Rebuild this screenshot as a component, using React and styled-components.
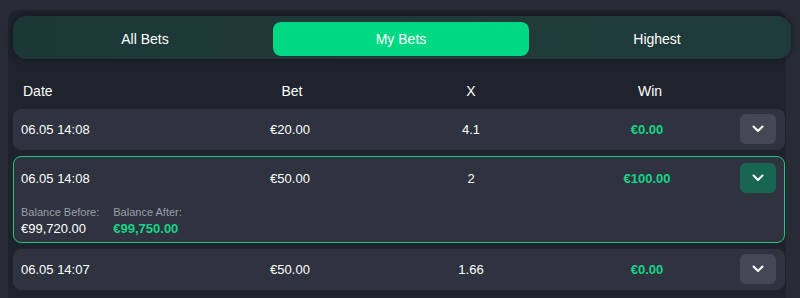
import React from 'react'
import styled, { createGlobalStyle } from 'styled-components'

const GlobalStyle = createGlobalStyle`
  body {
    margin: 0;
    background: #272c37;
    font-family: "Liberation Sans", Arial, sans-serif;
    color: #ffffff;
  }
`

const bets = [
  { date: '06.05 14:08', bet: '€20.00', x: '4.1', win: '€0.00' },
  {
    date: '06.05 14:08', bet: '€50.00', x: '2', win: '€100.00',
    open: true, before: '€99,720.00', after: '€99,750.00',
  },
  { date: '06.05 14:07', bet: '€50.00', x: '1.66', win: '€0.00' },
]

function Chevron() {
  return (
    <svg width="12" height="8" viewBox="0 0 12 8" fill="none">
      <path d="M1.5 1.5 L6 6 L10.5 1.5" stroke="#fff" strokeWidth="2" strokeLinecap="round" strokeLinejoin="round" />
    </svg>
  )
}

function BetRow({ bet }) {
  return (
    <Row open={bet.open}>
      <Cells>
        <Cell>{bet.date}</Cell>
        <Cell center>{bet.bet}</Cell>
        <Cell center>{bet.x}</Cell>
        <Cell center green>{bet.win}</Cell>
        <Toggle open={bet.open}><Chevron /></Toggle>
      </Cells>
      {bet.open && (
        <Details>
          <Balance>
            <Label>Balance Before:</Label>
            <Amount>{bet.before}</Amount>
          </Balance>
          <Balance>
            <Label>Balance After:</Label>
            <Amount green>{bet.after}</Amount>
          </Balance>
        </Details>
      )}
    </Row>
  )
}

export default function App() {
  return (
    <>
      <GlobalStyle />
      <Panel>
        <Tabs>
          <Tab>All Bets</Tab>
          <Tab active>My Bets</Tab>
          <Tab>Highest</Tab>
        </Tabs>
        <Header>
          <span>Date</span>
          <HeadCell>Bet</HeadCell>
          <HeadCell>X</HeadCell>
          <HeadCell>Win</HeadCell>
        </Header>
        <List>
          {bets.map((b, i) => <BetRow key={i} bet={b} />)}
        </List>
      </Panel>
    </>
  )
}

const Panel = styled.div`
  margin: 10px 14px 0 8px;
  height: 288px;
  background: #1f232d;
  border-radius: 10px 10px 0 0;
  padding: 6px 0 0 5px;
  box-sizing: border-box;
`
const Tabs = styled.div`
  display: grid;
  grid-template-columns: repeat(3, 1fr);
  height: 43px;
  margin-right: -5px;
  padding: 6px 6px 3px 4px;
  box-sizing: border-box;
  border-radius: 14px;
  background: linear-gradient(90deg, #1c3836 0%, #213b3b 60%, #1f3a3a 100%);
  box-shadow: 0 0 6px rgba(10, 12, 18, 0.6);
`
const Tab = styled.div`
  display: flex;
  align-items: center;
  justify-content: center;
  font-size: 14px;
  color: #ffffff;
  border-radius: 8px;
  background: ${p => (p.active ? '#00d884' : 'transparent')};
`
const Header = styled.div`
  display: grid;
  grid-template-columns: 192px 154px 204px 154px;
  padding: 24px 0 0 10px;
  height: 50px;
  box-sizing: border-box;
  font-size: 14px;
  line-height: 16px;
`
const HeadCell = styled.span`
  text-align: center;
`
const List = styled.div`
  display: flex;
  flex-direction: column;
  gap: 6px;
  margin-right: 1px;
`
const Row = styled.div`
  background: #2e333f;
  border-radius: 8px;
  border: 1px solid ${p => (p.open ? '#1fc583' : 'transparent')};
  padding: ${p => (p.open ? '6px 8px 5px 7px' : '4px 8px 5px 7px')};
`
const Cells = styled.div`
  display: grid;
  grid-template-columns: 190px 158px 204px 148px 1fr;
  align-items: center;
  height: 30px;
`
const Cell = styled.div`
  font-size: 13px;
  text-align: ${p => (p.center ? 'center' : 'left')};
  color: ${p => (p.green ? '#16d487' : '#ffffff')};
  font-weight: ${p => (p.green ? 'bold' : 'normal')};
`
const Toggle = styled.div`
  justify-self: end;
  width: 36px;
  height: 30px;
  border-radius: 6px;
  background: ${p => (p.open ? '#176652' : '#434854')};
  display: flex;
  align-items: center;
  justify-content: center;
`
const Details = styled.div`
  display: flex;
  gap: 14px;
  margin-top: 13px;
`
const Balance = styled.div`
  display: flex;
  flex-direction: column;
  gap: 2px;
`
const Label = styled.span`
  font-size: 11px;
  line-height: 13px;
  color: #9b9fa8;
`
const Amount = styled.span`
  font-size: 13px;
  line-height: 16px;
  color: ${p => (p.green ? '#16d487' : '#ffffff')};
  font-weight: ${p => (p.green ? 'bold' : 'normal')};
`
